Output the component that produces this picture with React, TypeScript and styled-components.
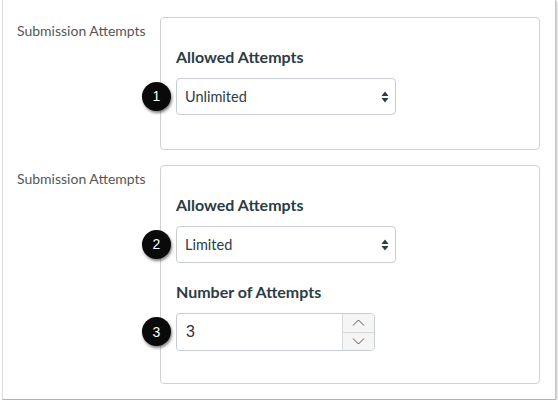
import styled, { createGlobalStyle } from "styled-components";

const GlobalStyle = createGlobalStyle`
    html, body {
        margin: 0;
        padding: 0;
        background: #ffffff;
        font-family: Lato, "Liberation Sans", sans-serif;
    }
`;

const Frame = styled.div`
    box-sizing: border-box;
    margin-left: 2px;
    width: 554px;
    height: 400px;
    padding: 17px 0 0 14px;
    border-left: 1px solid #dcdcdc;
    border-right: 1px solid #c4c4c4;
    border-bottom: 1px solid #b5b5b5;
    box-shadow: 1px 1px 2px rgba(0, 0, 0, 0.25);
    display: flex;
    flex-direction: column;
    gap: 15px;
`;

const Row = styled.div`
    display: flex;
    align-items: flex-start;
`;

const RowLabel = styled.div`
    width: 143px;
    padding-top: 5px;
    font-size: 14px;
    line-height: 18px;
    color: #565656;
`;

const Card = styled.div<{ $height: number }>`
    box-sizing: border-box;
    width: 380px;
    height: ${(p) => p.$height}px;
    border: 1px solid #cfd3d6;
    border-radius: 4px;
    padding: 29px 0 0 15px;
    display: flex;
    flex-direction: column;
`;

const FieldTitle = styled.div<{ $gap?: number }>`
    font-weight: 700;
    font-size: 16px;
    line-height: 20px;
    color: #2d3b45;
    margin-top: ${(p) => p.$gap ?? 0}px;
    margin-bottom: 11px;
`;

const Control = styled.div`
    position: relative;
`;

const Badge = styled.div`
    position: absolute;
    left: -34px;
    top: 50%;
    margin-top: -15px;
    width: 29px;
    height: 29px;
    border-radius: 50%;
    background: #0a0a0a;
    color: #ffffff;
    font-family: "Liberation Sans", Arial, sans-serif;
    font-size: 14px;
    display: flex;
    align-items: center;
    justify-content: center;
    box-shadow: 1px 2px 3px rgba(0, 0, 0, 0.5);
`;

const SelectBox = styled.div`
    box-sizing: border-box;
    width: 220px;
    height: 37px;
    border: 1px solid #c7cdd1;
    border-radius: 4px;
    display: flex;
    align-items: center;
    justify-content: space-between;
    padding: 0 6px 0 8px;
    font-size: 14.5px;
    color: #2d3b45;
`;

const NumberBox = styled.div`
    box-sizing: border-box;
    width: 199px;
    height: 38px;
    border: 1px solid #c7cdd1;
    border-radius: 4px;
    display: flex;
    overflow: hidden;
`;

const NumberValue = styled.div`
    flex: 1;
    display: flex;
    align-items: center;
    padding-left: 9px;
    font-family: "Liberation Sans", Arial, sans-serif;
    font-size: 16px;
    color: #333333;
`;

const Spinner = styled.div`
    width: 31px;
    border-left: 1px solid #d5d9dc;
    background: #f5f5f5;
    display: flex;
    flex-direction: column;
`;

const SpinButton = styled.div<{ $top?: boolean }>`
    flex: 1;
    display: flex;
    align-items: center;
    justify-content: center;
    border-bottom: ${(p) => (p.$top ? "1px solid #d5d9dc" : "none")};
`;

const UpDown = () => (
    <svg width="8" height="12" viewBox="0 0 8 12">
        <path d="M4 0.5 L7.5 5 L0.5 5 Z" fill="#2d3b45" />
        <path d="M4 11.5 L7.5 7 L0.5 7 Z" fill="#2d3b45" />
    </svg>
);

const Chevron = ({ up }: { up?: boolean }) => (
    <svg width="13" height="7" viewBox="0 0 13 7">
        <path
            d={up ? "M1 6.5 L6.5 1 L12 6.5" : "M1 0.5 L6.5 6 L12 0.5"}
            fill="none"
            stroke="#555"
            strokeWidth="1"
        />
    </svg>
);

const Select = ({ n, value }: { n: number; value: string }) => (
    <Control>
        <Badge>{n}</Badge>
        <SelectBox>
            <span>{value}</span>
            <UpDown />
        </SelectBox>
    </Control>
);

export default function App() {
    return (
        <>
            <GlobalStyle />
            <Frame>
                <Row>
                    <RowLabel>Submission Attempts</RowLabel>
                    <Card $height={133}>
                        <FieldTitle>Allowed Attempts</FieldTitle>
                        <Select n={1} value="Unlimited" />
                    </Card>
                </Row>
                <Row>
                    <RowLabel>Submission Attempts</RowLabel>
                    <Card $height={219}>
                        <FieldTitle>Allowed Attempts</FieldTitle>
                        <Select n={2} value="Limited" />
                        <FieldTitle $gap={19}>Number of Attempts</FieldTitle>
                        <Control>
                            <Badge>3</Badge>
                            <NumberBox>
                                <NumberValue>3</NumberValue>
                                <Spinner>
                                    <SpinButton $top>
                                        <Chevron up />
                                    </SpinButton>
                                    <SpinButton>
                                        <Chevron />
                                    </SpinButton>
                                </Spinner>
                            </NumberBox>
                        </Control>
                    </Card>
                </Row>
            </Frame>
        </>
    );
}
